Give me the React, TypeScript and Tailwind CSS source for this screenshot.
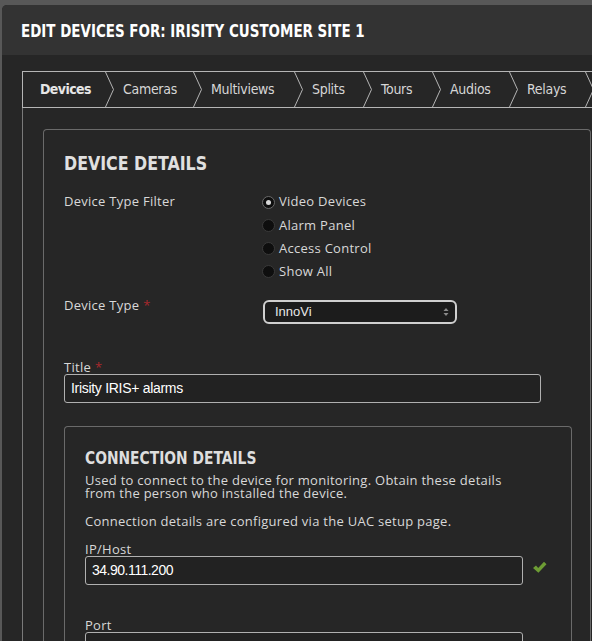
import React from "react";

const heading = { fontFamily: '"DejaVu Sans Condensed", "Liberation Sans Narrow", Roboto, sans-serif' };
const body = { fontFamily: '"Open Sans", "DejaVu Sans", sans-serif' };
const field = { fontFamily: '"Liberation Sans", Arial, sans-serif' };

const tabs = [
  { label: "Devices", w: 83, active: true },
  { label: "Cameras", w: 88 },
  { label: "Multiviews", w: 101 },
  { label: "Splits", w: 69 },
  { label: "Tours", w: 69 },
  { label: "Audios", w: 77 },
  { label: "Relays", w: 76 },
];

const filters = ["Video Devices", "Alarm Panel", "Access Control", "Show All"];

function Chevron() {
  return (
    <svg className="absolute right-[-9px] top-0 z-10" width="10" height="35" viewBox="0 0 10 35">
      <polyline points="0.5,0 8.5,17.5 0.5,35" fill="none" stroke="#b5b5b5" strokeWidth="1" />
    </svg>
  );
}

function Radio({ checked }: { checked?: boolean }) {
  return (
    <span
      className={
        "flex h-[13px] w-[13px] items-center justify-center rounded-full border bg-[#0e0e0e] " +
        (checked ? "border-[#6a6a6a]" : "border-[#3a3a3a]")
      }
    >
      {checked && <span className="h-[5px] w-[5px] rounded-full bg-[#d8d8d8]" />}
    </span>
  );
}

function Required() {
  return <span className="ml-[4px] text-[#a8282c]">*</span>;
}

function CheckMark() {
  return (
    <svg width="15" height="13" viewBox="0 0 15 13" className="ml-[9px] mt-[5px]">
      <polygon points="1,7 4,4.5 6.2,7 12,0.8 14.5,3.2 6.4,11.8" fill="#6d9c34" />
    </svg>
  );
}

export default function App() {
  return (
    <div className="h-[641px] w-[592px] overflow-hidden bg-[#585858] pl-[2px] pt-[5px]">
      <div className="h-full overflow-hidden rounded-tl-[5px] bg-[#262626]">
        {/* dialog header */}
        <div className="flex h-[50px] items-center bg-[#333333] pl-[19px]">
          <h1
            style={heading}
            className="inline-block origin-left scale-x-[0.83] text-[18px] font-bold whitespace-nowrap text-white"
          >
            EDIT DEVICES FOR: IRISITY CUSTOMER SITE 1
          </h1>
        </div>

        <div className="pl-[20px] pt-[16px]">
          {/* breadcrumb tabs */}
          <div className="flex h-[37px] w-[700px] border-y border-l border-[#b5b5b5]">
            {tabs.map((t) => (
              <div
                key={t.label}
                style={{ ...heading, width: t.w }}
                className={
                  "relative flex shrink-0 items-center pl-[17px] text-[14px] whitespace-nowrap " +
                  (t.active ? "font-bold tracking-[-0.6px] text-[#e6e6e6]" : "tracking-[-0.3px] text-[#d6d6d6]")
                }
              >
                {t.label}
                <Chevron />
              </div>
            ))}
          </div>

          <div className="h-[600px] border-l border-[#7a7a7a] pl-[20px] pt-[21px]" style={body}>
            {/* device details card */}
            <div className="w-[548px] rounded-[4px] border border-b-0 border-[#6a6a6a] px-[20px] pt-[19px] pb-[40px] text-[13px] tracking-[0.27px] text-[#d8d8d8]">
              <h2
                style={heading}
                className="inline-block origin-left scale-x-[0.88] text-[20px] font-bold leading-[28px] tracking-normal text-[#e0e0e0]"
              >
                DEVICE DETAILS
              </h2>

              <div className="mt-[14px] flex">
                <div className="w-[198px] leading-[20px]">Device Type Filter</div>
                <div className="flex flex-col gap-[3.3px] pt-[1px]">
                  {filters.map((f, i) => (
                    <label key={f} className="flex h-[20px] items-center gap-[4px]">
                      <Radio checked={i === 0} />
                      <span>{f}</span>
                    </label>
                  ))}
                </div>
              </div>

              <div className="mt-[18px] flex items-start">
                <div className="mt-[-1px] w-[199px] leading-[13px]">
                  Device Type
                  <Required />
                </div>
                <div className="flex h-[24px] w-[194px] items-center justify-between rounded-[6px] border-2 border-[#cfcfcf] bg-[#1c1c1c] pl-[10px] pr-[6px]">
                  <span style={field} className="text-[13px] tracking-normal text-[#e8e8e8]">InnoVi</span>
                  <svg width="6" height="10" viewBox="0 0 6 10">
                    <polygon points="3,1 5.5,4 0.5,4" fill="#8a8a8a" />
                    <polygon points="3,9 5.5,6 0.5,6" fill="#8a8a8a" />
                  </svg>
                </div>
              </div>

              <div className="mt-[35px] leading-[16px]">
                Title
                <Required />
              </div>
              <div
                style={field}
                className="mt-[-1px] flex h-[29px] w-[477px] items-center rounded-[3px] border border-[#b0b0b0] bg-[#222222] pl-[6px] text-[14px] tracking-[-0.3px] text-white"
              >
                Irisity IRIS+ alarms
              </div>

              {/* connection details card */}
              <div className="mt-[23px] w-[508px] rounded-[4px] border border-b-0 border-[#6a6a6a] px-[20px] pt-[19px] pb-[30px]">
                <h3
                  style={heading}
                  className="inline-block origin-left scale-x-[0.855] text-[18px] font-bold leading-[24px] tracking-normal text-[#dedede]"
                >
                  CONNECTION DETAILS
                </h3>
                <p className="mt-[4px] w-[440px] leading-[13px]">
                  Used to connect to the device for monitoring. Obtain these details from the person who installed the device.
                </p>
                <p className="mt-[15px] leading-[13px]">Connection details are configured via the UAC setup page.</p>

                <div className="mt-[13px] leading-[16px]">IP/Host</div>
                <div className="mt-[-1px] flex">
                  <div
                    style={field}
                    className="flex h-[29px] w-[438px] items-center rounded-[3px] border border-[#b0b0b0] bg-[#222222] pl-[6px] text-[14px] tracking-[-0.5px] text-white"
                  >
                    34.90.111.200
                  </div>
                  <CheckMark />
                </div>

                <div className="mt-[32px] leading-[16px]">Port</div>
                <div className="mt-[-1px] h-[29px] w-[438px] rounded-[3px] border border-[#b0b0b0] bg-[#222222]" />
              </div>
            </div>
          </div>
        </div>
      </div>
    </div>
  );
}
